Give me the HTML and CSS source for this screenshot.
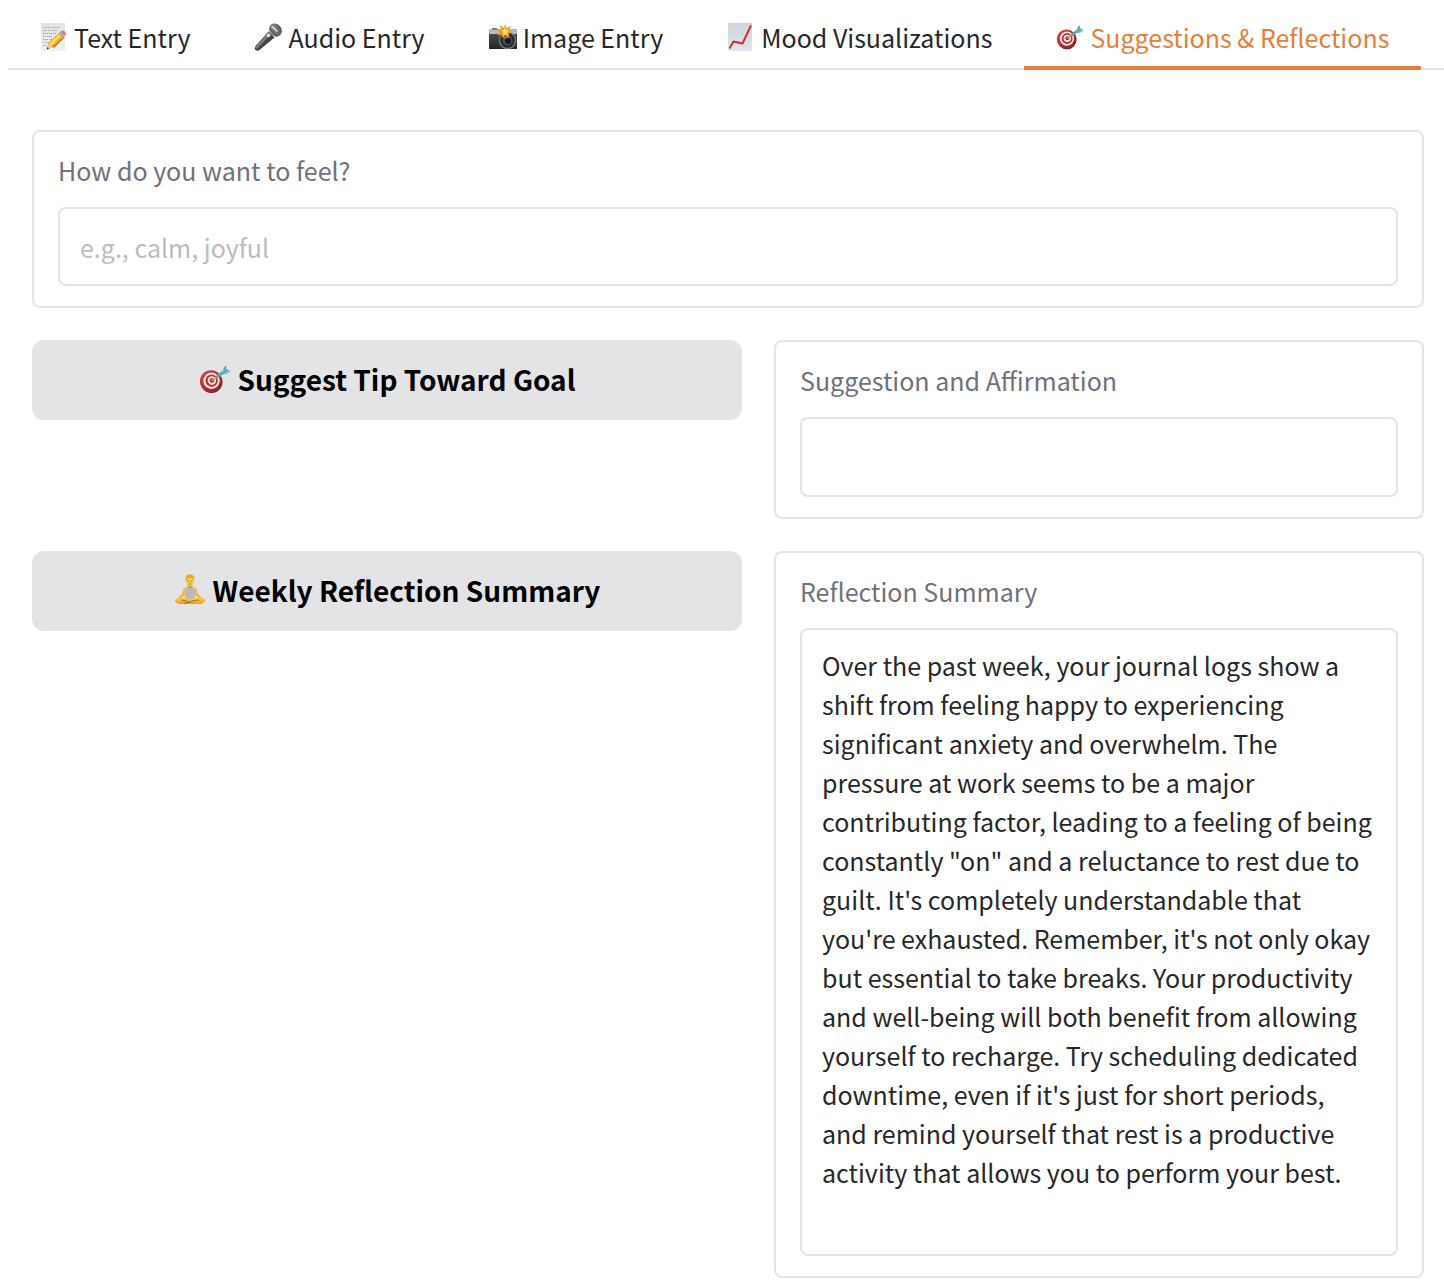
FILE: index.html
```html
<!DOCTYPE html>
<html lang="en">
<head>
<meta charset="utf-8">
<meta name="viewport" content="width=device-width, initial-scale=1">
<title>Mood Journal</title>
<link rel="stylesheet" href="styles.css">
</head>
<body>
<svg class="defs" aria-hidden="true">
  <defs>
    <linearGradient id="red" x1="0" y1="0" x2="1" y2="1"><stop offset="0" stop-color="#d8403c"/><stop offset="1" stop-color="#9c1a1c"/></linearGradient>
    <linearGradient id="paper" x1="0" y1="0" x2="0" y2="1"><stop offset="0" stop-color="#e2e3e4"/><stop offset="1" stop-color="#f1f1f1"/></linearGradient>
    <linearGradient id="chart" x1="0" y1="0" x2="0" y2="1"><stop offset="0" stop-color="#cbd3dc"/><stop offset="1" stop-color="#e0e7ee"/></linearGradient>
    <linearGradient id="body" x1="0" y1="0" x2="0" y2="1"><stop offset="0" stop-color="#55575a"/><stop offset="1" stop-color="#242527"/></linearGradient>
    <linearGradient id="skin" x1="0" y1="0" x2="0" y2="1"><stop offset="0" stop-color="#fbd04e"/><stop offset="1" stop-color="#dda02a"/></linearGradient>
    <linearGradient id="knob" x1="0" y1="0" x2="1" y2="1"><stop offset="0" stop-color="#98989a"/><stop offset="1" stop-color="#515153"/></linearGradient>
  </defs>
  <symbol id="target" viewBox="0 0 32 32">
    <ellipse cx="12.500" cy="19" rx="11" ry="11" fill="#6f1a1b"/>
    <ellipse cx="12" cy="18.300" rx="11" ry="11" fill="url(#red)"/>
    <circle cx="12.500" cy="17.800" r="8.200" fill="#f3eeee"/>
    <circle cx="12.700" cy="17.700" r="6.200" fill="#c42e2e"/>
    <circle cx="12.900" cy="17.500" r="4.200" fill="#f3eeee"/>
    <circle cx="13" cy="17.400" r="2.300" fill="#c42e2e"/>
    <path d="M13 17.300 19 13" stroke="#d7a13c" stroke-width="1.800"/>
    <path d="M18.500 13.500 25 8.500" stroke="#56a9b2" stroke-width="3.200" stroke-linecap="round"/>
    <path d="M22.500 10 24.500 5 27 2.500 27.500 6.500 32 8 28 11 23.500 11.500Z" fill="#77c4cb"/>
    <path d="M23.500 10.500 28.500 6.500M25.500 6.500 26.500 3.500" stroke="#397f8c" stroke-width="1"/>
  </symbol>
  <symbol id="memo" viewBox="0 0 28 28">
    <path d="M1 0H25V28H1Z" fill="url(#paper)"/>
    <path d="M3.500 4.500h3m1 0h4m1 0h3m1 0h3M3 7.500h4m1 0h3m1 0h5M3 10.500h5m1 0h3m1 0h3M3 13.500h3m1 0h5M3 16.500h5m1 0h3M3 19.500h2m1 0h3M3 22.500h4" fill="none" stroke="#a6a6a6" stroke-width="1" stroke-dasharray="1.400 .5"/>
    <path d="m8 20 12-11 4 4-11 11-5 2Z" fill="#efb52e"/>
    <path d="m9 21 12-11 1.500 1.300L11 22.500Z" fill="#ffdc70"/>
    <path d="m12.500 24 11-10.500 1 1L14 25Z" fill="#b67a18"/>
    <path d="m8 20 5 4-6 2.500Z" fill="#e8c893"/><path d="m7.300 24 1.700 1.500-2.500 1Z" fill="#303030"/>
    <path d="m18.500 10.500 2-2 4.500 4.500-2 2Z" fill="#a9b5b5"/>
    <path d="m20.500 9 1.500-1.500q3-.500 4 3.500L25 13Z" fill="#ed7474"/>
  </symbol>
  <symbol id="mic" viewBox="0 0 28 28">
    <path d="M14.500 8.500 20.500 14.500 5.500 27Q3 28.500 1 26.500 0 25 2 22.500Z" fill="#434345"/>
    <path d="M14.500 8.500 17 11 3 26 1 24.500Z" fill="#7b7b7d"/>
    <ellipse cx="21.500" cy="7" rx="6" ry="7" transform="rotate(-42 21.500 7)" fill="url(#knob)"/>
    <path d="m15.500 5.500 7.500 8" stroke="#59595b" stroke-width="1.600"/>
    <path d="m18 3.500 5.500 5" stroke="#d4d4d6" stroke-width="1.800"/>
    <circle cx="14.500" cy="12.500" r="1.800" fill="#f0f0f0"/>
  </symbol>
  <symbol id="camera" viewBox="0 0 28 28">
    <path d="M0 8.500Q0 6 2 6H26Q28 6 28 8.500V26H0Z" fill="url(#body)"/>
    <path d="M0 11V8.500Q0 6 2 6H26Q28 6 28 8.500V11Z" fill="#b7b9bb"/>
    <path d="M3 5h5v2H3Z" fill="#7b7d80"/>
    <circle cx="18.500" cy="17.500" r="8.700" fill="#77797c"/><circle cx="18.500" cy="17.500" r="7.300" fill="#29292c"/>
    <circle cx="18.500" cy="17.500" r="5" fill="#4c4e54"/><circle cx="19" cy="18" r="3" fill="#17181b"/>
    <path d="M15 15.500q2-2 4-1" stroke="#9a9da4" fill="none"/>
    <path d="m16 1 1.500 4 4.500-2-2 4 4 2-4.500 1.500 1 4-4.500-2-2 3-1.500-4-4 1 2-3.500L7 6.500l5-.5L11 2l4 3Z" fill="#f49a28"/>
    <path d="m16 4 1 3 3 0-2 2 1 3-3-1-2 1 0-3-2-2 3 0Z" fill="#ffe45c"/>
  </symbol>
  <symbol id="graph" viewBox="0 0 28 28">
    <path d="M1 0H25V28H1Z" fill="url(#chart)"/>
    <path d="M1 7H25M1 14H25M1 21H25M7 0V28M13 0V28M19 0V28" stroke="#d5dce4" stroke-width=".5"/>
    <path d="m2.500 25.500 4-7 9 2L24 2.500" fill="none" stroke="#cb2e2d" stroke-width="1.900" stroke-linejoin="round"/>
  </symbol>
  <symbol id="yoga" viewBox="0 0 32 32">
    <path d="M12 13Q9 14 8.500 19L3 25l2 1.500 6-5.500Z" fill="#efb940"/>
    <path d="M20 13q3 1 3.500 6l5.500 6-2 1.500-6-5.500Z" fill="#efb940"/>
    <path d="M3 24.500q-3 0-2 3 2 3 8 2.500h14q6 .5 8-2.500 1-3-2-3l-7-.5H10Z" fill="url(#skin)"/>
    <path d="M7 26q5 0 8 2.500 5-3 10-2.500M10 29.500l6-1.500" fill="none" stroke="#aa701d"/>
    <path d="M11.500 13.500q2 .5 2.500-1h4q.5 1.500 2.500 1L21 24q-5 2-10 0Z" fill="#b8babf"/>
    <path d="M13.500 11h5v2q-2.500 3-5 0Z" fill="#d99a2c"/>
    <ellipse cx="16" cy="7" rx="4.200" ry="5.300" fill="#fbd04e"/>
    <path d="M11.500 7Q11 0 16 .5 21 0 20.500 7L19 4.500q-3-1-5.500 0Z" fill="#e2a52e"/>
    <path d="M13.500 7.300h1.500m2 0h1.500M14.800 10h2.400" stroke="#83530c" stroke-width=".8"/>
  </symbol>
</svg>

<nav class="tabs" role="tablist" aria-label="Journal sections">
  <button class="tab" role="tab" aria-selected="false"><svg class="icon" aria-hidden="true"><use href="#memo"/></svg>Text Entry</button>
  <button class="tab" role="tab" aria-selected="false"><svg class="icon" aria-hidden="true"><use href="#mic"/></svg>Audio Entry</button>
  <button class="tab" role="tab" aria-selected="false"><svg class="icon" aria-hidden="true"><use href="#camera"/></svg>Image Entry</button>
  <button class="tab" role="tab" aria-selected="false"><svg class="icon" aria-hidden="true"><use href="#graph"/></svg>Mood Visualizations</button>
  <button class="tab tab-active" role="tab" aria-selected="true"><svg class="icon" aria-hidden="true"><use href="#target"/></svg>Suggestions &amp; Reflections</button>
</nav>

<main class="content">
  <div class="panel">
    <label class="label" for="goal">How do you want to feel?</label>
    <input class="field" id="goal" type="text" placeholder="e.g., calm, joyful">
  </div>
  <div class="row">
    <button class="action" type="button"><svg class="icon icon-large" aria-hidden="true"><use href="#target"/></svg>Suggest Tip Toward Goal</button>
    <div class="panel">
      <label class="label" for="suggestion">Suggestion and Affirmation</label>
      <textarea class="field" id="suggestion" rows="1" readonly></textarea>
    </div>
  </div>
  <div class="row">
    <button class="action" type="button"><svg class="icon icon-large" aria-hidden="true"><use href="#yoga"/></svg>Weekly Reflection Summary</button>
    <div class="panel">
      <label class="label" for="summary">Reflection Summary</label>
      <textarea class="field field-long" id="summary" rows="15" readonly>Over the past week, your journal logs show a shift from feeling happy to experiencing significant anxiety and overwhelm. The pressure at work seems to be a major contributing factor, leading to a feeling of being constantly "on" and a reluctance to rest due to guilt. It's completely understandable that you're exhausted. Remember, it's not only okay but essential to take breaks. Your productivity and well-being will both benefit from allowing yourself to recharge. Try scheduling dedicated downtime, even if it's just for short periods, and remind yourself that rest is a productive activity that allows you to perform your best.</textarea>
    </div>
  </div>
</main>
</body>
</html>
```
FILE: styles.css
```css
* {
  box-sizing: border-box;
}

body {
  margin: 0;
  padding: 8px 0 8px 8px;
  background: #fff;
  color: #27272a;
  font-family: "Noto Sans CJK SC", "Noto Sans", sans-serif;
  font-size: 25px;
  line-height: 39px;
}

button,
input,
textarea {
  font: inherit;
  color: inherit;
}

.defs {
  position: absolute;
  width: 0;
  height: 0;
}

.icon {
  flex: none;
  width: 28px;
  height: 28px;
}

.icon-large {
  width: 32px;
  height: 32px;
}

.tabs {
  display: flex;
  height: 62px;
  box-shadow: inset 0 -2px #e4e4e7;
}

.tab {
  display: flex;
  align-items: center;
  gap: 6px;
  padding: 0 32px;
  border: 0;
  border-bottom: 4px solid transparent;
  background: none;
  white-space: nowrap;
}

.tab-active {
  border-bottom-color: #e77d36;
  color: #e77d36;
}

.content {
  display: grid;
  gap: 32px;
  padding: 60px 20px 0 24px;
}

.row {
  display: grid;
  grid-template-columns: 71fr 65fr;
  align-items: start;
  gap: 32px;
}

.panel {
  min-width: 0;
  padding: 19px 24px 20px;
  border: 2px solid #e4e4e7;
  border-radius: 8px;
}

.label {
  display: block;
  margin-bottom: 17px;
  color: #71717a;
}

.field {
  display: block;
  width: 100%;
  padding: 18px 20px;
  border: 2px solid #e4e4e7;
  border-radius: 8px;
  background: #fff;
  outline: none;
  resize: none;
  overflow: hidden;
}

input.field {
  height: 79px;
}

textarea.field {
  min-height: 80px;
}

.field-long {
  padding: 16px 22px 23px 20px;
}

.field::placeholder {
  color: #bbbbc2;
  opacity: 1;
}

.action {
  display: flex;
  align-items: center;
  justify-content: center;
  gap: 7px;
  height: 80px;
  padding: 0 0 2px;
  border: 0;
  border-radius: 12px;
  background: #e4e4e7;
  color: #000;
  font-size: 28px;
  font-weight: 700;
}
```
